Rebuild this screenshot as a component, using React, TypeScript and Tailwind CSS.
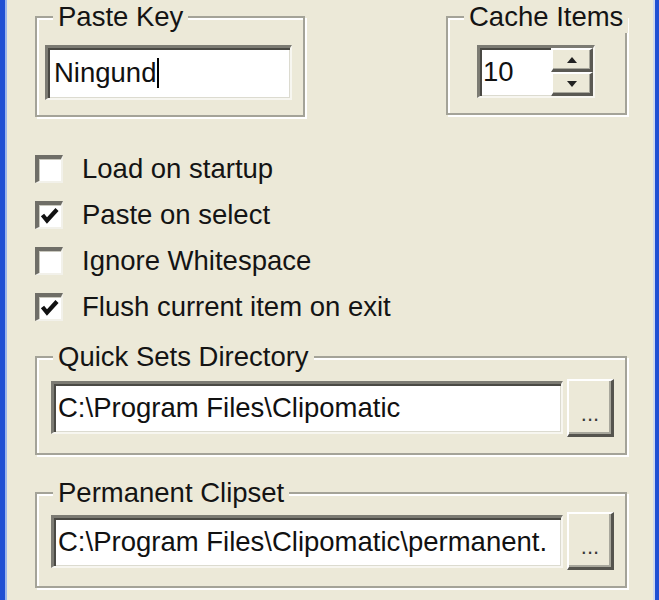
import React from "react";

const face = { fontFamily: '"Liberation Sans", Arial, Helvetica, sans-serif' };

function Group({
  label,
  className,
  children,
}: {
  label: string;
  className: string;
  children: React.ReactNode;
}) {
  return (
    <div
      className={`relative border-2 border-[#a4a398] shadow-[inset_2px_2px_0_#ffffff,2px_2px_0_#ffffff] ${className}`}
    >
      <span className="absolute left-[16px] top-[-17px] whitespace-nowrap bg-[#ece9d8] px-[5px] text-[27.5px] leading-[32px] text-[#141414]">
        {label}
      </span>
      {children}
    </div>
  );
}

function Sunken({ className, children }: { className: string; children: React.ReactNode }) {
  return (
    <div
      className={`flex border-t-[3px] border-l-[3px] border-r-2 border-b-2 border-t-[#7c7b73] border-l-[#7c7b73] border-r-[#f7f6f0] border-b-[#f7f6f0] shadow-[inset_2px_2px_0_#4a4944,inset_-1px_-1px_0_#dcdbd0] ${className}`}
    >
      {children}
    </div>
  );
}

function Browse() {
  return (
    <div className="flex h-[58px] w-[47px] shrink-0 items-end justify-center border-t-2 border-l-2 border-r-[3px] border-b-[3px] border-t-white border-l-white border-r-[#55544e] border-b-[#55544e] bg-[#ece9d8] pb-[9px] shadow-[inset_-2px_-2px_0_#a8a79c] text-[22px] leading-[22px] text-[#3a3a3a]">
      ...
    </div>
  );
}

function Check({ checked, label }: { checked: boolean; label: string }) {
  return (
    <div className="flex h-[46px] items-center">
      <div className="flex h-[28px] w-[28px] items-center justify-center border-t-[4px] border-l-[4px] border-r-2 border-b-2 border-t-[#6f6e67] border-l-[#6f6e67] border-r-[#f2f1ea] border-b-[#f2f1ea] bg-white shadow-[inset_1px_1px_0_#c9c8be]">
        {checked && (
          <svg width="20" height="20" viewBox="0 0 20 20">
            <polyline
              points="2.5,9 7,14.5 17,3.5"
              fill="none"
              stroke="#111"
              strokeWidth="4.2"
              strokeLinejoin="miter"
            />
          </svg>
        )}
      </div>
      <span className="ml-[19px] text-[27.5px] leading-[32px] text-[#141414]">{label}</span>
    </div>
  );
}

function SpinArrow({ up }: { up: boolean }) {
  return (
    <svg width="10" height="6" viewBox="0 0 10 6">
      <polygon points={up ? "5,0 10,6 0,6" : "0,0 10,0 5,6"} fill="#222" />
    </svg>
  );
}

function SpinButton({ up }: { up: boolean }) {
  return (
    <div className="flex flex-1 items-center justify-center border-t-2 border-l-2 border-r-[3px] border-b-[3px] border-t-white border-l-white border-r-[#5a5953] border-b-[#5a5953] bg-[#ece9d8] shadow-[inset_-1px_-1px_0_#a8a79c]">
      <SpinArrow up={up} />
    </div>
  );
}

export default function App() {
  return (
    <div
      style={face}
      className="h-[600px] w-[659px] overflow-hidden border-l-[5px] border-r-[4px] border-[#1f4fd3] bg-[#ece9d8] shadow-[inset_2px_0_0_#9ab5ec,inset_-2px_0_0_#cdd8ef]"
    >
      <div className="flex flex-col pl-[30px] pr-[28px] pt-[16px]">
        <div className="flex items-start">
          <Group label="Paste Key" className="h-[101px] w-[270px] pl-[8px] pt-[27px]">
            <Sunken className="h-[55px] w-[247px] items-center bg-white pl-[6px]">
              <span className="text-[27.5px] leading-[32px] text-[#111]">Ningund</span>
              <span className="ml-[1px] h-[30px] w-[2px] bg-black" />
            </Sunken>
          </Group>
          <Group label="Cache Items" className="ml-[141px] h-[99px] w-[181px] pl-[29px] pt-[27px]">
            <Sunken className="h-[53px] w-[118px] bg-white">
              <div className="flex flex-1 items-center pl-[3px] text-[27.5px] leading-[32px] text-[#111]">
                10
              </div>
              <div className="flex w-[42px] flex-col">
                <SpinButton up />
                <SpinButton up={false} />
              </div>
            </Sunken>
          </Group>
        </div>

        <div className="mt-[29px] flex flex-col">
          <Check checked={false} label="Load on startup" />
          <Check checked label="Paste on select" />
          <Check checked={false} label="Ignore Whitespace" />
          <Check checked label="Flush current item on exit" />
        </div>

        <Group label="Quick Sets Directory" className="mt-[26px] h-[99px] w-[592px] pl-[14px]">
          <div className="flex h-full items-center gap-[4px] pt-[4px]">
            <Sunken className="h-[53px] w-[512px] items-center overflow-hidden bg-white pl-[4px]">
              <span className="whitespace-nowrap text-[27.5px] leading-[32px] text-[#111]">
                C:\Program Files\Clipomatic
              </span>
            </Sunken>
            <Browse />
          </div>
        </Group>

        <Group label="Permanent Clipset" className="mt-[37px] h-[96px] w-[592px] pl-[14px]">
          <div className="flex h-full items-center gap-[4px] pt-[2px]">
            <Sunken className="h-[53px] w-[512px] items-center overflow-hidden bg-white pl-[4px]">
              <span className="whitespace-nowrap text-[27.5px] leading-[32px] text-[#111]">
                C:\Program Files\Clipomatic\permanent.
              </span>
            </Sunken>
            <Browse />
          </div>
        </Group>
      </div>
    </div>
  );
}
